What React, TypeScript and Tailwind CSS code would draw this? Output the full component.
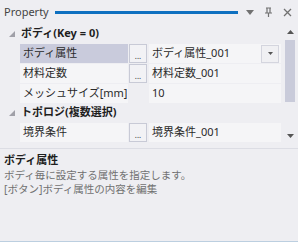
import React from 'react';

interface Row {
  label: string;
  value: string;
  button?: boolean;
  dropdown?: boolean;
  selected?: boolean;
}

const bodyRows: Row[] = [
  { label: 'ボディ属性', value: 'ボディ属性_001', button: true, dropdown: true, selected: true },
  { label: '材料定数', value: '材料定数_001', button: true },
  { label: 'メッシュサイズ[mm]', value: '10' },
];

const topoRows: Row[] = [{ label: '境界条件', value: '境界条件_001', button: true }];

function Expander() {
  return (
    <svg width="6" height="6" viewBox="0 0 6 6">
      <polygon points="6,0 6,6 0,6" fill="#a0a0a8" />
    </svg>
  );
}

function Category({ title }: { title: string }) {
  return (
    <div className="h-[19px] flex items-center">
      <div className="w-[21px] pl-[9px] flex items-center">
        <Expander />
      </div>
      <span className="text-[11px] font-bold text-[#1e1e1e]">{title}</span>
    </div>
  );
}

function PropRow({ row }: { row: Row }) {
  return (
    <div className="h-[19px] mt-[1px] flex">
      <div className="w-[20px]" />
      <div
        className={`w-[108px] flex items-center pl-[3px] text-[11px] text-[#2a2a2a] ${
          row.selected ? 'bg-[#c9cbdc]' : 'bg-[#f5f5f7]'
        }`}
      >
        {row.label}
      </div>
      <div className="w-[20px] flex items-center justify-center">
        {row.button && (
          <div className="w-[18px] h-[19px] border border-[#c8cad6] bg-[#f2f2f5] flex items-end justify-center pb-[2px]">
            <span className="text-[8px] leading-none text-[#333]">...</span>
          </div>
        )}
      </div>
      <div className="ml-[1px] flex-1 flex items-center bg-[#f5f5f7] pl-[3px] text-[11px] text-[#2a2a2a]">
        <span className="flex-1">{row.value}</span>
        {row.dropdown && (
          <div className="w-[18px] h-[18px] mr-[2px] border border-[#d4d5de] bg-[#f0f0f3] flex items-center justify-center">
            <svg width="5" height="3" viewBox="0 0 5 3">
              <polygon points="0,0 5,0 2.5,3" fill="#555" />
            </svg>
          </div>
        )}
      </div>
    </div>
  );
}

export default function App() {
  return (
    <div
      className="w-[298px] h-[242px] bg-[#eeeef2] flex flex-col overflow-hidden"
      style={{ fontFamily: '"Noto Sans", "Noto Sans CJK JP", sans-serif' }}
    >
      {/* title bar */}
      <div className="h-[24px] flex items-center pl-[4px] pr-[6px]">
        <span className="text-[11px] text-[#444]">Property</span>
        <div className="flex-1 h-[3px] bg-[#0e70c0] ml-[6px] mr-[8px]" />
        <div className="flex items-center gap-[10px]">
          <svg width="8" height="5" viewBox="0 0 8 5">
            <polygon points="0,0 8,0 4,5" fill="#717171" />
          </svg>
          <svg width="9" height="10" viewBox="0 0 9 10">
            <path d="M2 1h5M3 1v5M6 1v5M1 6h7M4.5 6v4" stroke="#717171" strokeWidth="1.2" fill="none" />
          </svg>
          <svg width="9" height="9" viewBox="0 0 9 9">
            <path d="M1 1l7 7M8 1l-7 7" stroke="#717171" strokeWidth="1.3" />
          </svg>
        </div>
      </div>

      {/* grid */}
      <div className="h-[123px] flex">
        <div className="flex-1 flex flex-col pr-[2px]">
          <Category title="ボディ(Key = 0)" />
          {bodyRows.map((r) => (
            <PropRow key={r.label} row={r} />
          ))}
          <Category title="トポロジ(複数選択)" />
          {topoRows.map((r) => (
            <PropRow key={r.label} row={r} />
          ))}
        </div>
        <div className="w-[14px] mr-[1px] flex flex-col items-center">
          <div className="h-[16px] flex items-center">
            <svg width="7" height="4" viewBox="0 0 7 4">
              <polygon points="0,4 7,4 3.5,0" fill="#555" />
            </svg>
          </div>
          <div className="w-[10px] h-[62px] bg-[#c9cbda]" />
          <div className="flex-1" />
          <div className="h-[22px] flex items-center">
            <svg width="7" height="4" viewBox="0 0 7 4">
              <polygon points="0,0 7,0 3.5,4" fill="#555" />
            </svg>
          </div>
        </div>
      </div>

      <div className="h-[1px] bg-[#dcdde4] mt-[1px]" />

      {/* description */}
      <div className="flex-1 flex flex-col px-[4px] pt-[3px]">
        <span className="text-[11px] font-bold text-[#1e1e1e] leading-[16px]">ボディ属性</span>
        <span className="text-[10.5px] text-[#717171] leading-[14px]">ボディ毎に設定する属性を指定します。</span>
        <span className="text-[10.5px] text-[#717171] leading-[14px]">[ボタン]ボディ属性の内容を編集</span>
      </div>
      <div className="h-[1px] bg-[#bccfe0]" />
    </div>
  );
}
